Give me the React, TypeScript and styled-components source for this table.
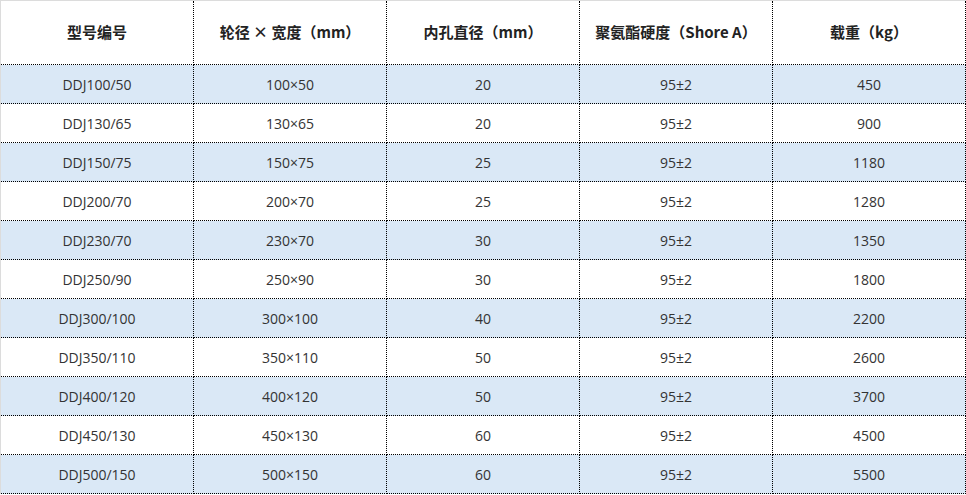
import React from "react";
import styled, {createGlobalStyle} from "styled-components";

const GlobalStyle = createGlobalStyle`
  html, body {
    margin: 0;
    padding: 0;
    background: #fff;
  }
`;

interface IRow {
    model: string;
    size: string;
    bore: string;
    hardness: string;
    load: string;
}

const headers = ['型号编号', '轮径 × 宽度（mm）', '内孔直径（mm）', '聚氨酯硬度（Shore A）', '载重（kg）'];

const rows: IRow[] = [
    {model: 'DDJ100/50', size: '100×50', bore: '20', hardness: '95±2', load: '450'},
    {model: 'DDJ130/65', size: '130×65', bore: '20', hardness: '95±2', load: '900'},
    {model: 'DDJ150/75', size: '150×75', bore: '25', hardness: '95±2', load: '1180'},
    {model: 'DDJ200/70', size: '200×70', bore: '25', hardness: '95±2', load: '1280'},
    {model: 'DDJ230/70', size: '230×70', bore: '30', hardness: '95±2', load: '1350'},
    {model: 'DDJ250/90', size: '250×90', bore: '30', hardness: '95±2', load: '1800'},
    {model: 'DDJ300/100', size: '300×100', bore: '40', hardness: '95±2', load: '2200'},
    {model: 'DDJ350/110', size: '350×110', bore: '50', hardness: '95±2', load: '2600'},
    {model: 'DDJ400/120', size: '400×120', bore: '50', hardness: '95±2', load: '3700'},
    {model: 'DDJ450/130', size: '450×130', bore: '60', hardness: '95±2', load: '4500'},
    {model: 'DDJ500/150', size: '500×150', bore: '60', hardness: '95±2', load: '5500'},
];

const App = () => {
    return (
        <>
            <GlobalStyle/>
            <Table>
                <colgroup>
                    {headers.map(h => <col key={h} style={{width: 193}}/>)}
                </colgroup>
                <thead>
                <tr>
                    {headers.map(h => <HeadCell key={h}>{h}</HeadCell>)}
                </tr>
                </thead>
                <tbody>
                {rows.map((r, i) => (
                    <Row key={r.model} $shaded={i % 2 === 0}>
                        <Cell>{r.model}</Cell>
                        <Cell>{r.size}</Cell>
                        <Cell>{r.bore}</Cell>
                        <Cell>{r.hardness}</Cell>
                        <Cell>{r.load}</Cell>
                    </Row>
                ))}
                </tbody>
            </Table>
        </>
    )
}

export default App;

const Table = styled.table`
  width: 966px;
  table-layout: fixed;
  border-collapse: separate;
  border-spacing: 0;
  border-top: 1px solid #dcdcdc;
  border-left: 1px solid #dcdcdc;
  font-family: "Open Sans", "Noto Sans CJK SC", sans-serif;
  color: #333;
`;

const HeadCell = styled.th`
  height: 64px;
  padding: 0 0 2px;
  box-sizing: border-box;
  text-align: center;
  vertical-align: middle;
  font-family: "Noto Sans CJK SC", sans-serif;
  font-size: 15px;
  font-weight: 600;
  color: #222;
  border-right: 1px dotted #000;
  border-bottom: 1px dotted #000;
`;

const Row = styled.tr<{ $shaded: boolean }>`
  background: ${p => p.$shaded ? '#dae8f6' : '#fff'};
`;

const Cell = styled.td`
  height: 38px;
  padding: 0;
  text-align: center;
  vertical-align: middle;
  font-size: 14px;
  border-right: 1px dotted #000;
  border-bottom: 1px dotted #000;
`;
